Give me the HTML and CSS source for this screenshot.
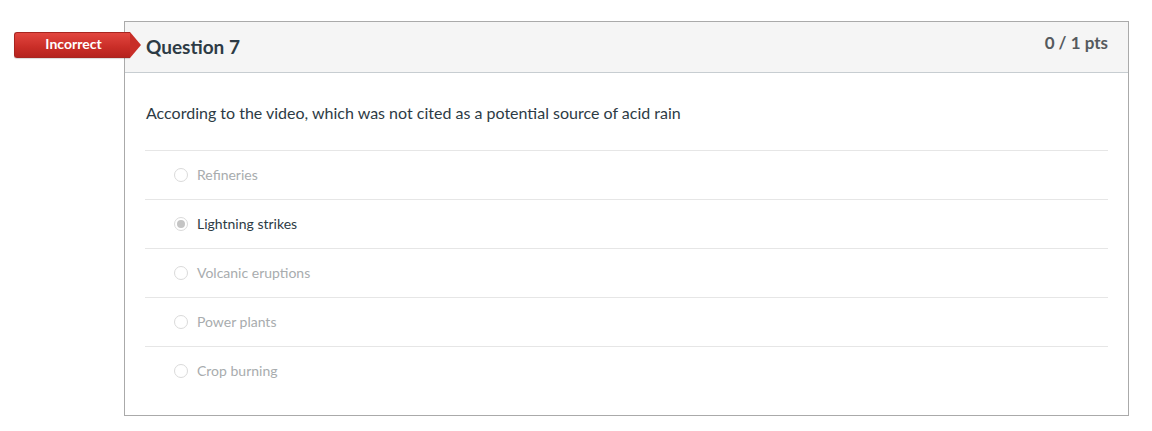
FILE: index.html
```html
<!DOCTYPE html>
<html>
<head>
<meta charset="utf-8">
<link rel="stylesheet" href="styles.css">
</head>
<body>
<div class="page">
  <div class="question">
    <div class="badge">Incorrect</div>
    <div class="header">
      <h2 class="title">Question 7</h2>
      <div class="pts">0 / 1 pts</div>
    </div>
    <div class="body">
      <div class="qtext">According to the video, which was not cited as a potential source of acid rain</div>
      <div class="answers">
        <div class="answer"><span class="radio"></span><span class="label">Refineries</span></div>
        <div class="answer selected"><span class="radio"></span><span class="label">Lightning strikes</span></div>
        <div class="answer"><span class="radio"></span><span class="label">Volcanic eruptions</span></div>
        <div class="answer"><span class="radio"></span><span class="label">Power plants</span></div>
        <div class="answer"><span class="radio"></span><span class="label">Crop burning</span></div>
      </div>
    </div>
  </div>
</div>
</body>
</html>
```
FILE: styles.css
```css
* { box-sizing: border-box; }
html, body { margin: 0; padding: 0; background: #fff; }
body { font-family: Lato, "Open Sans", sans-serif; color: #2d3b45; }
.page { padding: 21px 0 0 124px; width: 1129px; }
.question {
  position: relative;
  border: 1px solid #aaaaaa;
  width: 1005px;
}
.badge {
  position: absolute;
  left: -111px;
  top: 10px;
  width: 116px;
  height: 26px;
  background: linear-gradient(#e2463f, #c92d27 60%, #b5231e);
  border: 1px solid #a82520;
  border-right: none;
  border-radius: 3px 0 0 3px;
  color: #fff;
  font-weight: 700;
  font-size: 14px;
  line-height: 22px;
  text-align: center;
  padding-left: 2px;
  box-shadow: 0 1px 1px rgba(0,0,0,0.15);
}
.badge::after {
  content: "";
  position: absolute;
  right: -11px;
  top: -1px;
  width: 0;
  height: 0;
  border-top: 13px solid transparent;
  border-bottom: 13px solid transparent;
  border-left: 11px solid #c82e28;
}
.header {
  display: flex;
  justify-content: space-between;
  align-items: flex-start;
  background: #f5f5f5;
  border-bottom: 1px solid #c7cdd1;
  height: 51px;
  padding: 0 20px 0 21px;
}
.title {
  margin: 0;
  font-size: 19px;
  font-weight: 700;
  line-height: 50px;
  color: #2d3b45;
}
.pts {
  font-size: 17px;
  font-weight: 700;
  color: #555a5e;
  line-height: 18px;
  padding-top: 12px;
}
.body { padding: 20px 20px 20px 20px; }
.qtext {
  font-size: 16px;
  line-height: 22px;
  padding: 9px 0 26px 1px;
}
.answer {
  display: flex;
  align-items: center;
  height: 49px;
  border-top: 1px solid #e6e6e6;
  padding-left: 29px;
  font-size: 14px;
  color: #a8acae;
}
.answer.selected { color: #2d3b45; }
.radio {
  width: 14px;
  height: 14px;
  border-radius: 50%;
  border: 1px solid #dadada;
  background: #fff;
  margin-right: 9px;
  margin-top: -1px;
  position: relative;
}
.answer.selected .radio::after {
  content: "";
  position: absolute;
  left: 2px;
  top: 2px;
  width: 8px;
  height: 8px;
  border-radius: 50%;
  background: #c4c4c4;
}
.label { line-height: 20px; }
```
